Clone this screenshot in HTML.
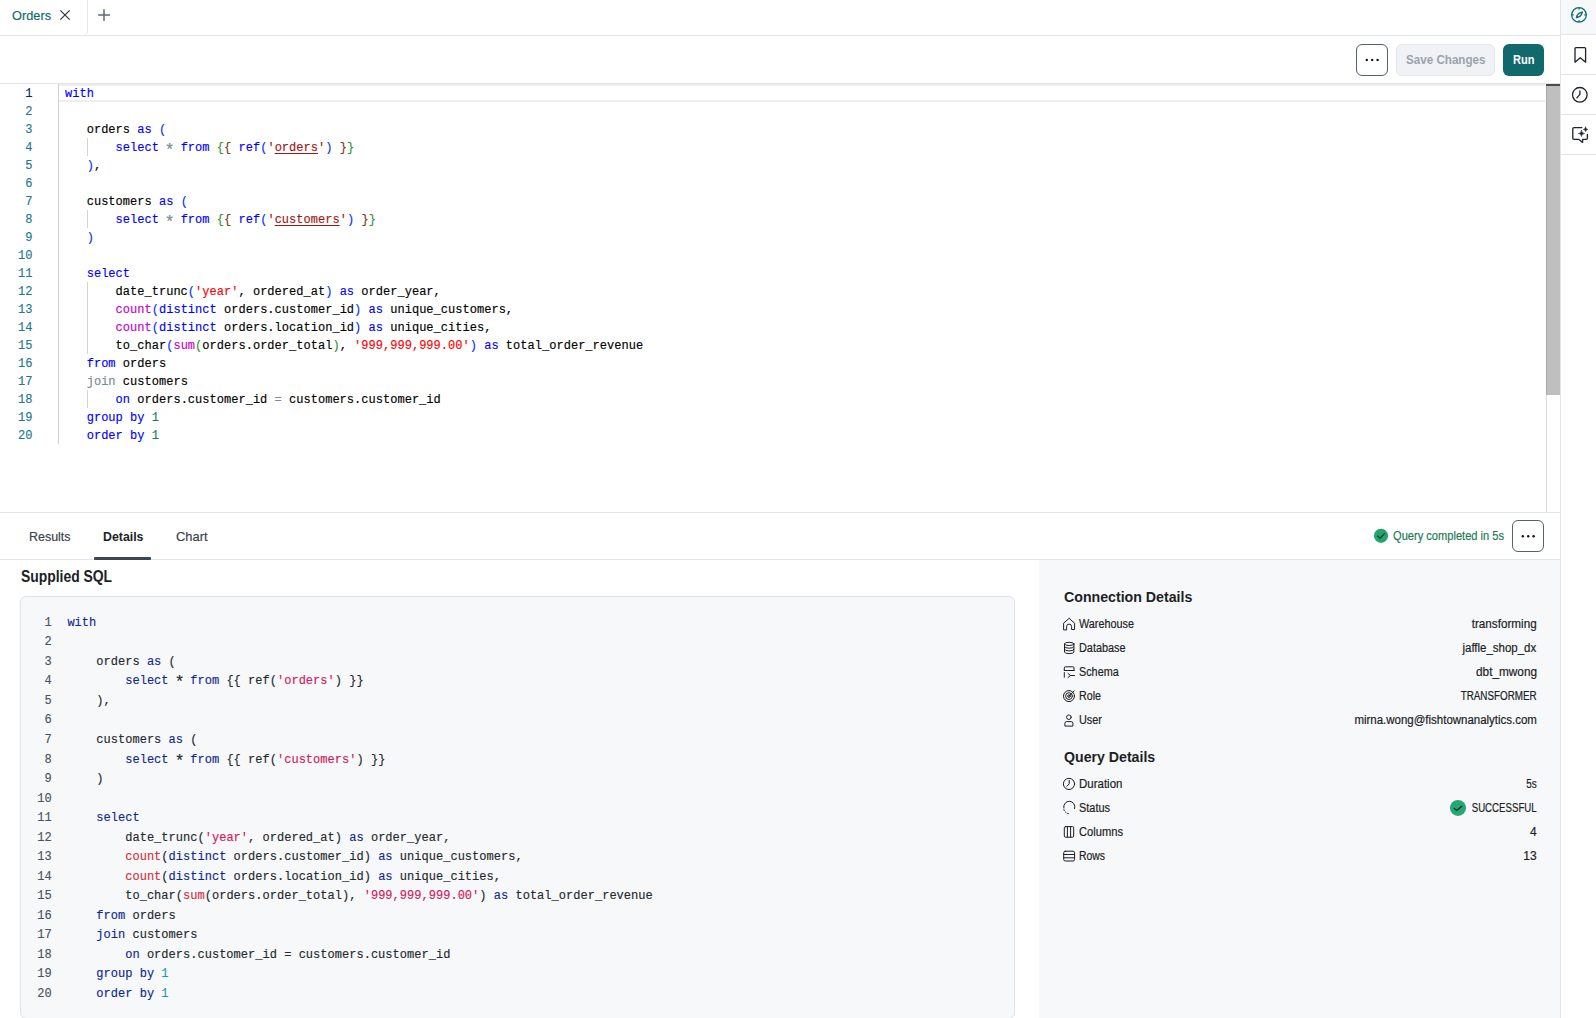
<!DOCTYPE html>
<html><head><meta charset="utf-8">
<style>
*{box-sizing:border-box;margin:0;padding:0}
html,body{width:1596px;height:1018px;overflow:hidden;background:#fff;font-family:"Liberation Sans",sans-serif;color:#1b1f26;position:relative}
.m{font-family:"Liberation Mono",monospace;white-space:pre;position:absolute;letter-spacing:0.025px;-webkit-text-stroke:0.15px currentColor}
svg{position:absolute;overflow:visible}
</style></head><body>
<div style="position:absolute;left:0px;top:35px;width:1560px;height:1px;background:#e1e4e9"></div>
<div style="position:absolute;left:0px;top:0px;width:88px;height:35px;border-right:1px solid #e4e7eb;border-bottom-right-radius:4px"></div>
<div style="position:absolute;top:8.53px;font-size:13.5px;line-height:13.5px;font-weight:normal;color:#126b6d;white-space:pre;-webkit-text-stroke:0.2px currentColor;left:12.00px;transform-origin:0 0;transform:scaleX(0.9456);">Orders</div>
<svg style="left:0;top:0" width="1" height="1"><path d="M60.3 10.3 L69.7 19.7 M69.7 10.3 L60.3 19.7" stroke="#2b313b" stroke-width="1.15" fill="none"/></svg>
<svg style="left:0;top:0" width="1" height="1"><path d="M104 9.2 V21 M98.2 15.1 H110" stroke="#5f6673" stroke-width="1.5" fill="none"/></svg>
<div style="position:absolute;left:0px;top:83px;width:1560px;height:1px;background:#e1e4e9"></div>
<div style="position:absolute;left:1356px;top:44px;width:32px;height:32px;border:1.3px solid #56606e;border-radius:6px;background:#fff"></div>
<svg style="left:0;top:0" width="1" height="1"><circle cx="1366.8" cy="59.9" r="1.2" fill="#111"/></svg>
<svg style="left:0;top:0" width="1" height="1"><circle cx="1372.2" cy="59.9" r="1.2" fill="#111"/></svg>
<svg style="left:0;top:0" width="1" height="1"><circle cx="1377.6" cy="59.9" r="1.2" fill="#111"/></svg>
<div style="position:absolute;left:1396px;top:44px;width:99px;height:32px;border:1px solid #e3e6ea;border-radius:6px;background:#f0f2f5"></div>
<div style="position:absolute;top:53.32px;font-size:13.5px;line-height:13.5px;font-weight:bold;color:#9ba3af;white-space:pre;left:1405.80px;transform-origin:0 0;transform:scaleX(0.8613);">Save Changes</div>
<div style="position:absolute;left:1503px;top:44px;width:41px;height:32px;border-radius:6px;background:#11696b"></div>
<div style="position:absolute;top:53.32px;font-size:13.5px;line-height:13.5px;font-weight:bold;color:#ffffff;white-space:pre;left:1512.70px;transform-origin:0 0;transform:scaleX(0.8188);">Run</div>
<div style="position:absolute;left:1560px;top:0px;width:1px;height:1018px;background:#e1e4e9"></div>
<div style="position:absolute;left:1561px;top:0px;width:35px;height:34px;background:#f7f8fa"></div>
<div style="position:absolute;left:1561px;top:34px;width:35px;height:1px;background:#e1e4e9"></div>
<div style="position:absolute;left:1561px;top:74px;width:35px;height:1px;background:#e1e4e9"></div>
<div style="position:absolute;left:1561px;top:114px;width:35px;height:1px;background:#e1e4e9"></div>
<div style="position:absolute;left:1561px;top:154px;width:35px;height:1px;background:#e1e4e9"></div>
<svg style="left:0;top:0" width="1" height="1"><g fill="none" stroke="#136b6e" stroke-width="1.3">
<circle cx="1579" cy="14.9" r="7.3"/>
<path d="M1579 7.6 V9.6 M1579 20.2 V22.2 M1571.7 14.9 H1573.7 M1584.3 14.9 H1586.3"/>
<path d="M1582.3 12.1 C1582 14.6 1579.8 16.9 1576.5 17.6 C1576.8 15.1 1579 12.8 1582.3 12.1 Z"/>
</g></svg>
<svg style="left:0;top:0" width="1" height="1"><path d="M1575 62.2 V48.6 Q1575 47.6 1576 47.6 H1584.6 Q1585.6 47.6 1585.6 48.6 V62.2 L1580.3 57.8 Z" fill="none" stroke="#1d222b" stroke-width="1.3" stroke-linejoin="round"/></svg>
<svg style="left:0;top:0" width="1" height="1"><g fill="none" stroke="#1d222b" stroke-width="1.3" stroke-linecap="round"><circle cx="1579.8" cy="94.8" r="7.3"/><path d="M1579.9 90.8 V94.3 L1576.9 97.9"/></g></svg>
<svg style="left:0;top:0" width="1" height="1"><g fill="none" stroke="#1d222b" stroke-width="1.3" stroke-linecap="round" stroke-linejoin="round">
<path d="M1581.8 127.6 H1574 Q1572.8 127.6 1572.8 128.8 V138.2 Q1572.8 139.3 1574 139.3 H1578.6 L1582.6 142.4 L1582.6 139.3 H1586.2 Q1587.4 139.3 1587.4 138.1 V134.3"/>
<path d="M1581.5 130.5 Q1581.68 133.32 1584.5 133.5 Q1581.68 133.68 1581.5 136.5 Q1581.32 133.68 1578.5 133.5 Q1581.32 133.32 1581.5 130.5 Z" fill="#1d222b" stroke="#1d222b" stroke-width="0.6"/>
<path d="M1585.6 127.2 Q1585.73 129.27 1587.8 129.4 Q1585.73 129.53 1585.6 131.6 Q1585.47 129.53 1583.3999999999999 129.4 Q1585.47 129.27 1585.6 127.2 Z" fill="#1d222b" stroke="#1d222b" stroke-width="0.6"/>
</g></svg>
<div style="position:absolute;left:58px;top:84px;width:1px;height:360px;background:#cfcfcf"></div>
<div style="position:absolute;left:59px;top:84px;width:1486px;height:18px;border-top:2px solid #eeeeee;border-bottom:2px solid #eeeeee"></div>
<div style="position:absolute;left:1546px;top:84px;width:1px;height:428px;background:#dcdcdc"></div>
<div style="position:absolute;left:1546px;top:84px;width:14px;height:311px;background:#bfbfbf;border-left:1px solid #a9a9a9"></div>
<div style="position:absolute;left:1546px;top:84px;width:14px;height:2px;background:#4a4a4a"></div>
<div class="m" style="left:0;width:32.5px;text-align:right;top:84.60px;line-height:18px;font-size:12px;color:#0b216f">1</div>
<div class="m" style="left:65.0px;top:84.60px;line-height:18px;font-size:12px"><span style="color:#0000ff;">with</span></div>
<div class="m" style="left:0;width:32.5px;text-align:right;top:102.60px;line-height:18px;font-size:12px;color:#237893">2</div>
<div class="m" style="left:0;width:32.5px;text-align:right;top:120.60px;line-height:18px;font-size:12px;color:#237893">3</div>
<div class="m" style="left:65.0px;top:120.60px;line-height:18px;font-size:12px"><span style="color:#000000;">   orders </span><span style="color:#0000ff;">as</span><span style="color:#000000;"> </span><span style="color:#0431fa;">(</span></div>
<div class="m" style="left:0;width:32.5px;text-align:right;top:138.60px;line-height:18px;font-size:12px;color:#237893">4</div>
<div class="m" style="left:65.0px;top:138.60px;line-height:18px;font-size:12px"><span style="color:#000000;">       </span><span style="color:#0000ff;">select</span><span style="color:#000000;"> </span><span style="color:#778899;display:inline-block;width:7.225px;transform:translateY(2.5px) scale(1.35)">*</span><span style="color:#000000;"> </span><span style="color:#0000ff;">from</span><span style="color:#000000;"> </span><span style="color:#319331;">{</span><span style="color:#7b3814;">{</span><span style="color:#000000;"> </span><span style="color:#0000ff;">ref</span><span style="color:#0431fa;">(</span><span style="color:#a31515;">'</span><span style="color:#a31515;text-decoration:underline;text-underline-offset:2px">orders</span><span style="color:#a31515;">'</span><span style="color:#0431fa;">)</span><span style="color:#000000;"> </span><span style="color:#7b3814;">}</span><span style="color:#319331;">}</span></div>
<div class="m" style="left:0;width:32.5px;text-align:right;top:156.60px;line-height:18px;font-size:12px;color:#237893">5</div>
<div class="m" style="left:65.0px;top:156.60px;line-height:18px;font-size:12px"><span style="color:#000000;">   </span><span style="color:#0431fa;">)</span><span style="color:#000000;">,</span></div>
<div class="m" style="left:0;width:32.5px;text-align:right;top:174.60px;line-height:18px;font-size:12px;color:#237893">6</div>
<div class="m" style="left:0;width:32.5px;text-align:right;top:192.60px;line-height:18px;font-size:12px;color:#237893">7</div>
<div class="m" style="left:65.0px;top:192.60px;line-height:18px;font-size:12px"><span style="color:#000000;">   customers </span><span style="color:#0000ff;">as</span><span style="color:#000000;"> </span><span style="color:#0431fa;">(</span></div>
<div class="m" style="left:0;width:32.5px;text-align:right;top:210.60px;line-height:18px;font-size:12px;color:#237893">8</div>
<div class="m" style="left:65.0px;top:210.60px;line-height:18px;font-size:12px"><span style="color:#000000;">       </span><span style="color:#0000ff;">select</span><span style="color:#000000;"> </span><span style="color:#778899;display:inline-block;width:7.225px;transform:translateY(2.5px) scale(1.35)">*</span><span style="color:#000000;"> </span><span style="color:#0000ff;">from</span><span style="color:#000000;"> </span><span style="color:#319331;">{</span><span style="color:#7b3814;">{</span><span style="color:#000000;"> </span><span style="color:#0000ff;">ref</span><span style="color:#0431fa;">(</span><span style="color:#a31515;">'</span><span style="color:#a31515;text-decoration:underline;text-underline-offset:2px">customers</span><span style="color:#a31515;">'</span><span style="color:#0431fa;">)</span><span style="color:#000000;"> </span><span style="color:#7b3814;">}</span><span style="color:#319331;">}</span></div>
<div class="m" style="left:0;width:32.5px;text-align:right;top:228.60px;line-height:18px;font-size:12px;color:#237893">9</div>
<div class="m" style="left:65.0px;top:228.60px;line-height:18px;font-size:12px"><span style="color:#000000;">   </span><span style="color:#0431fa;">)</span></div>
<div class="m" style="left:0;width:32.5px;text-align:right;top:246.60px;line-height:18px;font-size:12px;color:#237893">10</div>
<div class="m" style="left:0;width:32.5px;text-align:right;top:264.60px;line-height:18px;font-size:12px;color:#237893">11</div>
<div class="m" style="left:65.0px;top:264.60px;line-height:18px;font-size:12px"><span style="color:#000000;">   </span><span style="color:#0000ff;">select</span></div>
<div class="m" style="left:0;width:32.5px;text-align:right;top:282.60px;line-height:18px;font-size:12px;color:#237893">12</div>
<div class="m" style="left:65.0px;top:282.60px;line-height:18px;font-size:12px"><span style="color:#000000;">       date_trunc</span><span style="color:#0431fa;">(</span><span style="color:#ff0000;">'year'</span><span style="color:#000000;">, ordered_at</span><span style="color:#0431fa;">)</span><span style="color:#000000;"> </span><span style="color:#0000ff;">as</span><span style="color:#000000;"> order_year,</span></div>
<div class="m" style="left:0;width:32.5px;text-align:right;top:300.60px;line-height:18px;font-size:12px;color:#237893">13</div>
<div class="m" style="left:65.0px;top:300.60px;line-height:18px;font-size:12px"><span style="color:#000000;">       </span><span style="color:#c700c7;">count</span><span style="color:#0431fa;">(</span><span style="color:#0000ff;">distinct</span><span style="color:#000000;"> orders.customer_id</span><span style="color:#0431fa;">)</span><span style="color:#000000;"> </span><span style="color:#0000ff;">as</span><span style="color:#000000;"> unique_customers,</span></div>
<div class="m" style="left:0;width:32.5px;text-align:right;top:318.60px;line-height:18px;font-size:12px;color:#237893">14</div>
<div class="m" style="left:65.0px;top:318.60px;line-height:18px;font-size:12px"><span style="color:#000000;">       </span><span style="color:#c700c7;">count</span><span style="color:#0431fa;">(</span><span style="color:#0000ff;">distinct</span><span style="color:#000000;"> orders.location_id</span><span style="color:#0431fa;">)</span><span style="color:#000000;"> </span><span style="color:#0000ff;">as</span><span style="color:#000000;"> unique_cities,</span></div>
<div class="m" style="left:0;width:32.5px;text-align:right;top:336.60px;line-height:18px;font-size:12px;color:#237893">15</div>
<div class="m" style="left:65.0px;top:336.60px;line-height:18px;font-size:12px"><span style="color:#000000;">       to_char</span><span style="color:#0431fa;">(</span><span style="color:#c700c7;">sum</span><span style="color:#319331;">(</span><span style="color:#000000;">orders.order_total</span><span style="color:#319331;">)</span><span style="color:#000000;">, </span><span style="color:#ff0000;">'999,999,999.00'</span><span style="color:#0431fa;">)</span><span style="color:#000000;"> </span><span style="color:#0000ff;">as</span><span style="color:#000000;"> total_order_revenue</span></div>
<div class="m" style="left:0;width:32.5px;text-align:right;top:354.60px;line-height:18px;font-size:12px;color:#237893">16</div>
<div class="m" style="left:65.0px;top:354.60px;line-height:18px;font-size:12px"><span style="color:#000000;">   </span><span style="color:#0000ff;">from</span><span style="color:#000000;"> orders</span></div>
<div class="m" style="left:0;width:32.5px;text-align:right;top:372.60px;line-height:18px;font-size:12px;color:#237893">17</div>
<div class="m" style="left:65.0px;top:372.60px;line-height:18px;font-size:12px"><span style="color:#000000;">   </span><span style="color:#778899;">join</span><span style="color:#000000;"> customers</span></div>
<div class="m" style="left:0;width:32.5px;text-align:right;top:390.60px;line-height:18px;font-size:12px;color:#237893">18</div>
<div class="m" style="left:65.0px;top:390.60px;line-height:18px;font-size:12px"><span style="color:#000000;">       </span><span style="color:#0000ff;">on</span><span style="color:#000000;"> orders.customer_id </span><span style="color:#778899;">=</span><span style="color:#000000;"> customers.customer_id</span></div>
<div class="m" style="left:0;width:32.5px;text-align:right;top:408.60px;line-height:18px;font-size:12px;color:#237893">19</div>
<div class="m" style="left:65.0px;top:408.60px;line-height:18px;font-size:12px"><span style="color:#000000;">   </span><span style="color:#0000ff;">group by</span><span style="color:#000000;"> </span><span style="color:#098658;">1</span></div>
<div class="m" style="left:0;width:32.5px;text-align:right;top:426.60px;line-height:18px;font-size:12px;color:#237893">20</div>
<div class="m" style="left:65.0px;top:426.60px;line-height:18px;font-size:12px"><span style="color:#000000;">   </span><span style="color:#0000ff;">order by</span><span style="color:#000000;"> </span><span style="color:#098658;">1</span></div>
<div style="position:absolute;left:87px;top:138px;width:1px;height:18px;background:#d3d3d3"></div>
<div style="position:absolute;left:87px;top:210px;width:1px;height:18px;background:#d3d3d3"></div>
<div style="position:absolute;left:87px;top:282px;width:1px;height:18px;background:#d3d3d3"></div>
<div style="position:absolute;left:87px;top:300px;width:1px;height:18px;background:#d3d3d3"></div>
<div style="position:absolute;left:87px;top:318px;width:1px;height:18px;background:#d3d3d3"></div>
<div style="position:absolute;left:87px;top:336px;width:1px;height:18px;background:#d3d3d3"></div>
<div style="position:absolute;left:87px;top:390px;width:1px;height:18px;background:#d3d3d3"></div>
<div style="position:absolute;left:0px;top:512px;width:1560px;height:1px;background:#e1e4e9"></div>
<div style="position:absolute;left:0px;top:559px;width:1560px;height:1px;background:#e1e4e9"></div>
<div style="position:absolute;top:529.52px;font-size:13.5px;line-height:13.5px;font-weight:normal;color:#3b4350;white-space:pre;-webkit-text-stroke:0.2px currentColor;left:28.60px;transform-origin:0 0;transform:scaleX(0.9218);">Results</div>
<div style="position:absolute;top:529.52px;font-size:13.5px;line-height:13.5px;font-weight:bold;color:#1b1f26;white-space:pre;left:102.50px;transform-origin:0 0;transform:scaleX(0.9146);">Details</div>
<div style="position:absolute;top:529.52px;font-size:13.5px;line-height:13.5px;font-weight:normal;color:#3b4350;white-space:pre;-webkit-text-stroke:0.2px currentColor;left:176.00px;transform-origin:0 0;transform:scaleX(0.9543);">Chart</div>
<div style="position:absolute;left:94px;top:557px;width:57px;height:3px;background:#3d4654;border-radius:1px"></div>
<svg style="left:0;top:0" width="1" height="1"><circle cx="1381" cy="535.8" r="7.1" fill="#25a46c"/><path d="M1377.7 535.9 L1380 538.2 L1384.4 533.6" fill="none" stroke="#173f31" stroke-width="1.3" stroke-linecap="round" stroke-linejoin="round"/></svg>
<div style="position:absolute;top:528.75px;font-size:13px;line-height:13px;font-weight:normal;color:#1c7a56;white-space:pre;-webkit-text-stroke:0.2px currentColor;left:1392.60px;transform-origin:0 0;transform:scaleX(0.8534);">Query completed in 5s</div>
<div style="position:absolute;left:1512px;top:520px;width:32px;height:32px;border:1.3px solid #56606e;border-radius:6px;background:#fff"></div>
<svg style="left:0;top:0" width="1" height="1"><circle cx="1522.8" cy="536.2" r="1.2" fill="#111"/></svg>
<svg style="left:0;top:0" width="1" height="1"><circle cx="1528.2" cy="536.2" r="1.2" fill="#111"/></svg>
<svg style="left:0;top:0" width="1" height="1"><circle cx="1533.6" cy="536.2" r="1.2" fill="#111"/></svg>
<div style="position:absolute;left:1039px;top:560px;width:521px;height:458px;background:#f7f8fa"></div>
<div style="position:absolute;top:569.40px;font-size:16px;line-height:16px;font-weight:bold;color:#1b1f26;white-space:pre;left:20.50px;transform-origin:0 0;transform:scaleX(0.8677);">Supplied SQL</div>
<div style="position:absolute;left:20px;top:596px;width:995px;height:423px;background:#f7f8fa;border:1px solid #dfe2e7;border-radius:6px"></div>
<div class="m" style="left:0;width:51.8px;text-align:right;top:613.80px;line-height:19.5px;font-size:12px;color:#4b5361">1</div>
<div class="m" style="left:67.4px;top:613.80px;line-height:19.5px;font-size:12px"><span style="color:#0e2a8e;">with</span></div>
<div class="m" style="left:0;width:51.8px;text-align:right;top:633.33px;line-height:19.5px;font-size:12px;color:#4b5361">2</div>
<div class="m" style="left:0;width:51.8px;text-align:right;top:652.86px;line-height:19.5px;font-size:12px;color:#4b5361">3</div>
<div class="m" style="left:67.4px;top:652.86px;line-height:19.5px;font-size:12px"><span style="color:#24292f;">    orders </span><span style="color:#0e2a8e;">as</span><span style="color:#24292f;"> (</span></div>
<div class="m" style="left:0;width:51.8px;text-align:right;top:672.39px;line-height:19.5px;font-size:12px;color:#4b5361">4</div>
<div class="m" style="left:67.4px;top:672.39px;line-height:19.5px;font-size:12px"><span style="color:#24292f;">        </span><span style="color:#0e2a8e;">select</span><span style="color:#24292f;"> </span><span style="color:#24292f;display:inline-block;width:7.225px;transform:translateY(2.5px) scale(1.35)">*</span><span style="color:#24292f;"> </span><span style="color:#0e2a8e;">from</span><span style="color:#24292f;"> {{ ref(</span><span style="color:#d3195b;">'orders'</span><span style="color:#24292f;">) }}</span></div>
<div class="m" style="left:0;width:51.8px;text-align:right;top:691.92px;line-height:19.5px;font-size:12px;color:#4b5361">5</div>
<div class="m" style="left:67.4px;top:691.92px;line-height:19.5px;font-size:12px"><span style="color:#24292f;">    ),</span></div>
<div class="m" style="left:0;width:51.8px;text-align:right;top:711.45px;line-height:19.5px;font-size:12px;color:#4b5361">6</div>
<div class="m" style="left:0;width:51.8px;text-align:right;top:730.98px;line-height:19.5px;font-size:12px;color:#4b5361">7</div>
<div class="m" style="left:67.4px;top:730.98px;line-height:19.5px;font-size:12px"><span style="color:#24292f;">    customers </span><span style="color:#0e2a8e;">as</span><span style="color:#24292f;"> (</span></div>
<div class="m" style="left:0;width:51.8px;text-align:right;top:750.51px;line-height:19.5px;font-size:12px;color:#4b5361">8</div>
<div class="m" style="left:67.4px;top:750.51px;line-height:19.5px;font-size:12px"><span style="color:#24292f;">        </span><span style="color:#0e2a8e;">select</span><span style="color:#24292f;"> </span><span style="color:#24292f;display:inline-block;width:7.225px;transform:translateY(2.5px) scale(1.35)">*</span><span style="color:#24292f;"> </span><span style="color:#0e2a8e;">from</span><span style="color:#24292f;"> {{ ref(</span><span style="color:#d3195b;">'customers'</span><span style="color:#24292f;">) }}</span></div>
<div class="m" style="left:0;width:51.8px;text-align:right;top:770.04px;line-height:19.5px;font-size:12px;color:#4b5361">9</div>
<div class="m" style="left:67.4px;top:770.04px;line-height:19.5px;font-size:12px"><span style="color:#24292f;">    )</span></div>
<div class="m" style="left:0;width:51.8px;text-align:right;top:789.57px;line-height:19.5px;font-size:12px;color:#4b5361">10</div>
<div class="m" style="left:0;width:51.8px;text-align:right;top:809.10px;line-height:19.5px;font-size:12px;color:#4b5361">11</div>
<div class="m" style="left:67.4px;top:809.10px;line-height:19.5px;font-size:12px"><span style="color:#24292f;">    </span><span style="color:#0e2a8e;">select</span></div>
<div class="m" style="left:0;width:51.8px;text-align:right;top:828.63px;line-height:19.5px;font-size:12px;color:#4b5361">12</div>
<div class="m" style="left:67.4px;top:828.63px;line-height:19.5px;font-size:12px"><span style="color:#24292f;">        date_trunc(</span><span style="color:#d3195b;">'year'</span><span style="color:#24292f;">, ordered_at) </span><span style="color:#0e2a8e;">as</span><span style="color:#24292f;"> order_year,</span></div>
<div class="m" style="left:0;width:51.8px;text-align:right;top:848.16px;line-height:19.5px;font-size:12px;color:#4b5361">13</div>
<div class="m" style="left:67.4px;top:848.16px;line-height:19.5px;font-size:12px"><span style="color:#24292f;">        </span><span style="color:#cf3140;">count</span><span style="color:#24292f;">(</span><span style="color:#0e2a8e;">distinct</span><span style="color:#24292f;"> orders.customer_id) </span><span style="color:#0e2a8e;">as</span><span style="color:#24292f;"> unique_customers,</span></div>
<div class="m" style="left:0;width:51.8px;text-align:right;top:867.69px;line-height:19.5px;font-size:12px;color:#4b5361">14</div>
<div class="m" style="left:67.4px;top:867.69px;line-height:19.5px;font-size:12px"><span style="color:#24292f;">        </span><span style="color:#cf3140;">count</span><span style="color:#24292f;">(</span><span style="color:#0e2a8e;">distinct</span><span style="color:#24292f;"> orders.location_id) </span><span style="color:#0e2a8e;">as</span><span style="color:#24292f;"> unique_cities,</span></div>
<div class="m" style="left:0;width:51.8px;text-align:right;top:887.22px;line-height:19.5px;font-size:12px;color:#4b5361">15</div>
<div class="m" style="left:67.4px;top:887.22px;line-height:19.5px;font-size:12px"><span style="color:#24292f;">        to_char(</span><span style="color:#cf3140;">sum</span><span style="color:#24292f;">(orders.order_total), </span><span style="color:#d3195b;">'999,999,999.00'</span><span style="color:#24292f;">) </span><span style="color:#0e2a8e;">as</span><span style="color:#24292f;"> total_order_revenue</span></div>
<div class="m" style="left:0;width:51.8px;text-align:right;top:906.75px;line-height:19.5px;font-size:12px;color:#4b5361">16</div>
<div class="m" style="left:67.4px;top:906.75px;line-height:19.5px;font-size:12px"><span style="color:#24292f;">    </span><span style="color:#0e2a8e;">from</span><span style="color:#24292f;"> orders</span></div>
<div class="m" style="left:0;width:51.8px;text-align:right;top:926.28px;line-height:19.5px;font-size:12px;color:#4b5361">17</div>
<div class="m" style="left:67.4px;top:926.28px;line-height:19.5px;font-size:12px"><span style="color:#24292f;">    </span><span style="color:#0e2a8e;">join</span><span style="color:#24292f;"> customers</span></div>
<div class="m" style="left:0;width:51.8px;text-align:right;top:945.81px;line-height:19.5px;font-size:12px;color:#4b5361">18</div>
<div class="m" style="left:67.4px;top:945.81px;line-height:19.5px;font-size:12px"><span style="color:#24292f;">        </span><span style="color:#0e2a8e;">on</span><span style="color:#24292f;"> orders.customer_id = customers.customer_id</span></div>
<div class="m" style="left:0;width:51.8px;text-align:right;top:965.34px;line-height:19.5px;font-size:12px;color:#4b5361">19</div>
<div class="m" style="left:67.4px;top:965.34px;line-height:19.5px;font-size:12px"><span style="color:#24292f;">    </span><span style="color:#0e2a8e;">group by</span><span style="color:#24292f;"> </span><span style="color:#1b9c9c;">1</span></div>
<div class="m" style="left:0;width:51.8px;text-align:right;top:984.87px;line-height:19.5px;font-size:12px;color:#4b5361">20</div>
<div class="m" style="left:67.4px;top:984.87px;line-height:19.5px;font-size:12px"><span style="color:#24292f;">    </span><span style="color:#0e2a8e;">order by</span><span style="color:#24292f;"> </span><span style="color:#1b9c9c;">1</span></div>
<div style="position:absolute;top:588.83px;font-size:15.5px;line-height:15.5px;font-weight:bold;color:#1b1f26;white-space:pre;left:1063.50px;transform-origin:0 0;transform:scaleX(0.9139);">Connection Details</div>
<div style="position:absolute;top:748.83px;font-size:15.5px;line-height:15.5px;font-weight:bold;color:#1b1f26;white-space:pre;left:1063.50px;transform-origin:0 0;transform:scaleX(0.9126);">Query Details</div>
<div style="position:absolute;top:617.80px;font-size:12px;line-height:12px;font-weight:normal;color:#1b1f26;white-space:pre;-webkit-text-stroke:0.2px currentColor;left:1079.00px;transform-origin:0 0;transform:scaleX(0.9027);">Warehouse</div>
<div style="position:absolute;top:617.80px;font-size:12px;line-height:12px;font-weight:normal;color:#1b1f26;white-space:pre;-webkit-text-stroke:0.2px currentColor;right:59.40px;transform-origin:100% 0;transform:scaleX(0.9747);">transforming</div>
<div style="position:absolute;top:641.80px;font-size:12px;line-height:12px;font-weight:normal;color:#1b1f26;white-space:pre;-webkit-text-stroke:0.2px currentColor;left:1079.00px;transform-origin:0 0;transform:scaleX(0.9054);">Database</div>
<div style="position:absolute;top:641.80px;font-size:12px;line-height:12px;font-weight:normal;color:#1b1f26;white-space:pre;-webkit-text-stroke:0.2px currentColor;right:59.41px;transform-origin:100% 0;transform:scaleX(0.9550);">jaffle_shop_dx</div>
<div style="position:absolute;top:665.80px;font-size:12px;line-height:12px;font-weight:normal;color:#1b1f26;white-space:pre;-webkit-text-stroke:0.2px currentColor;left:1079.00px;transform-origin:0 0;transform:scaleX(0.9015);">Schema</div>
<div style="position:absolute;top:665.80px;font-size:12px;line-height:12px;font-weight:normal;color:#1b1f26;white-space:pre;-webkit-text-stroke:0.2px currentColor;right:59.40px;transform-origin:100% 0;transform:scaleX(0.9832);">dbt_mwong</div>
<div style="position:absolute;top:689.80px;font-size:12px;line-height:12px;font-weight:normal;color:#1b1f26;white-space:pre;-webkit-text-stroke:0.2px currentColor;left:1079.00px;transform-origin:0 0;transform:scaleX(0.8910);">Role</div>
<div style="position:absolute;top:689.80px;font-size:12px;line-height:12px;font-weight:normal;color:#1b1f26;white-space:pre;-webkit-text-stroke:0.2px currentColor;right:59.40px;transform-origin:100% 0;transform:scaleX(0.8201);">TRANSFORMER</div>
<div style="position:absolute;top:713.80px;font-size:12px;line-height:12px;font-weight:normal;color:#1b1f26;white-space:pre;-webkit-text-stroke:0.2px currentColor;left:1079.00px;transform-origin:0 0;transform:scaleX(0.9073);">User</div>
<div style="position:absolute;top:713.80px;font-size:12px;line-height:12px;font-weight:normal;color:#1b1f26;white-space:pre;-webkit-text-stroke:0.2px currentColor;right:59.39px;transform-origin:100% 0;transform:scaleX(0.9559);">mirna.wong@fishtownanalytics.com</div>
<div style="position:absolute;top:777.80px;font-size:12px;line-height:12px;font-weight:normal;color:#1b1f26;white-space:pre;-webkit-text-stroke:0.2px currentColor;left:1079.00px;transform-origin:0 0;transform:scaleX(0.9568);">Duration</div>
<div style="position:absolute;top:777.80px;font-size:12px;line-height:12px;font-weight:normal;color:#1b1f26;white-space:pre;-webkit-text-stroke:0.2px currentColor;right:59.39px;transform-origin:100% 0;transform:scaleX(0.8294);">5s</div>
<div style="position:absolute;top:801.80px;font-size:12px;line-height:12px;font-weight:normal;color:#1b1f26;white-space:pre;-webkit-text-stroke:0.2px currentColor;left:1079.00px;transform-origin:0 0;transform:scaleX(0.9112);">Status</div>
<div style="position:absolute;top:801.80px;font-size:12px;line-height:12px;font-weight:normal;color:#1b1f26;white-space:pre;-webkit-text-stroke:0.2px currentColor;right:59.41px;transform-origin:100% 0;transform:scaleX(0.8055);">SUCCESSFUL</div>
<div style="position:absolute;top:825.80px;font-size:12px;line-height:12px;font-weight:normal;color:#1b1f26;white-space:pre;-webkit-text-stroke:0.2px currentColor;left:1079.00px;transform-origin:0 0;transform:scaleX(0.9294);">Columns</div>
<div style="position:absolute;top:825.80px;font-size:12px;line-height:12px;font-weight:normal;color:#1b1f26;white-space:pre;-webkit-text-stroke:0.2px currentColor;right:59.39px;transform-origin:100% 0;">4</div>
<div style="position:absolute;top:849.80px;font-size:12px;line-height:12px;font-weight:normal;color:#1b1f26;white-space:pre;-webkit-text-stroke:0.2px currentColor;left:1079.00px;transform-origin:0 0;transform:scaleX(0.8667);">Rows</div>
<div style="position:absolute;top:849.80px;font-size:12px;line-height:12px;font-weight:normal;color:#1b1f26;white-space:pre;-webkit-text-stroke:0.2px currentColor;right:59.40px;transform-origin:100% 0;">13</div>
<svg style="left:0;top:0" width="1" height="1"><g fill="none" stroke="#1b1f26" stroke-width="1.0" stroke-linecap="round" stroke-linejoin="round"><path d="M1063.6 629.5 V623.2 L1069.1 618.3 L1074.6 623.2 V629.5 H1071.6 V626.6 A2.5 2.5 0 0 0 1066.6 626.6 V629.5 Z"/></g></svg>
<svg style="left:0;top:0" width="1" height="1"><g fill="none" stroke="#1b1f26" stroke-width="1.0" stroke-linecap="round" stroke-linejoin="round"><ellipse cx="1069.2" cy="643.9" rx="4.7" ry="1.6"/><path d="M1064.5 643.9 V652 A4.7 1.6 0 0 0 1073.9 652 V643.9 M1064.5 646.6 A4.7 1.6 0 0 0 1073.9 646.6 M1064.5 649.3 A4.7 1.6 0 0 0 1073.9 649.3"/></g></svg>
<svg style="left:0;top:0" width="1" height="1"><g fill="none" stroke="#1b1f26" stroke-width="1.0" stroke-linecap="round" stroke-linejoin="round"><path d="M1064.3 670.5 V668 Q1064.3 666.8 1065.5 666.8 H1072.8 Q1074 666.8 1074 668 V670.5 M1064.3 670.5 H1074 M1064.3 672.5 V677.2 M1068 673.5 L1070.5 675.5 L1068 677.5 M1070.5 675.5 H1074.5" /></g></svg>
<svg style="left:0;top:0" width="1" height="1"><g fill="none" stroke="#1b1f26" stroke-width="1.0" stroke-linecap="round" stroke-linejoin="round"><circle cx="1069" cy="696.1" r="5.5"/><circle cx="1069" cy="696.1" r="3.4"/><circle cx="1069" cy="696.1" r="1.3"/><path d="M1069 696.1 L1074.3 690.8"/></g></svg>
<svg style="left:0;top:0" width="1" height="1"><g fill="none" stroke="#1b1f26" stroke-width="1.0" stroke-linecap="round" stroke-linejoin="round"><circle cx="1068.9" cy="717.2" r="2.3"/><path d="M1064.9 725.7 V723.3 Q1064.9 721.6 1066.6 721.6 H1071.2 Q1072.9 721.6 1072.9 723.3 V725.7 Z"/></g></svg>
<svg style="left:0;top:0" width="1" height="1"><g fill="none" stroke="#1b1f26" stroke-width="1.0" stroke-linecap="round" stroke-linejoin="round"><circle cx="1069" cy="783.9" r="5.6"/><path d="M1069.2 780.3 V783.9 L1066.8 786.4"/></g></svg>
<svg style="left:0;top:0" width="1" height="1"><g fill="none" stroke="#1b1f26" stroke-width="1.0" stroke-linecap="round" stroke-linejoin="round"><path d="M1063.8 808 A5.6 5.6 0 1 1 1074.6 808.6"/><path d="M1063.9 809.6 A5.6 5.6 0 0 0 1068.6 813.6" stroke-dasharray="1 1.6"/></g></svg>
<svg style="left:0;top:0" width="1" height="1"><g fill="none" stroke="#1b1f26" stroke-width="1.0" stroke-linecap="round" stroke-linejoin="round"><rect x="1064.3" y="826.6" width="9.4" height="10.6" rx="1.2"/><path d="M1067.4 826.6 V837.2 M1070.6 826.6 V837.2"/></g></svg>
<svg style="left:0;top:0" width="1" height="1"><g fill="none" stroke="#1b1f26" stroke-width="1.0" stroke-linecap="round" stroke-linejoin="round"><rect x="1063.7" y="851.2" width="10.9" height="9.8" rx="1.6"/><path d="M1063.7 854.5 H1074.6 M1063.7 857.8 H1074.6"/></g></svg>
<svg style="left:0;top:0" width="1" height="1"><circle cx="1458" cy="807.9" r="8" fill="#22a873"/><path d="M1454.4 808.4 L1456.7 810.5 L1461.8 806.3" fill="none" stroke="#1a2a2a" stroke-width="1.3" stroke-linecap="round" stroke-linejoin="round"/></svg>
</body></html>
